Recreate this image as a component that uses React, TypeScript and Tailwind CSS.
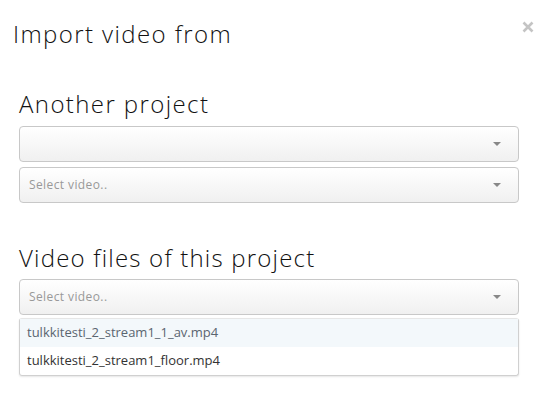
import React from "react";

function Arrow() {
  return (
    <span className="block w-0 h-0 border-t-[4px] border-x-[4px] border-b-0 border-t-[#888] border-x-transparent" />
  );
}

function Select({ placeholder }: { placeholder?: string }) {
  return (
    <div className="h-[36px] w-[500px] rounded-[4px] border border-[#c8c8c8] bg-gradient-to-b from-white to-[#f0f0f0] flex items-center justify-between pl-[9px] pr-[17px]">
      <span className="text-[12px] tracking-[0.4px] text-[#999]">{placeholder ?? ""}</span>
      <Arrow />
    </div>
  );
}

export default function App() {
  return (
    <div className="w-[548px] h-[400px] bg-white text-[#111]" style={{ fontFamily: "'Open Sans', Lato, sans-serif" }}>
      <div className="flex justify-between items-start pl-[13px] pr-[14px] pt-[19px]">
        <h1 className="text-[24px] leading-[29px] font-light tracking-[1.4px]">Import video from</h1>
        <svg width="12" height="12" viewBox="0 0 12 12" className="mt-[2px]">
          <path d="M1.5 1.5 L10.5 10.5 M10.5 1.5 L1.5 10.5" stroke="#c4c4c4" strokeWidth="2.6" strokeLinecap="butt" />
        </svg>
      </div>
      <div className="pl-[19px]">
        <h2 className="mt-[41px] text-[24px] leading-[29px] font-light tracking-[1.4px]">Another project</h2>
        <div className="mt-[8px] flex flex-col gap-[5px]">
          <Select />
          <Select placeholder="Select video.." />
        </div>
        <h2 className="mt-[40px] text-[24px] leading-[29px] font-light tracking-[1.2px]">Video files of this project</h2>
        <div className="mt-[7px]">
          <Select placeholder="Select video.." />
        </div>
        <div className="mt-[3px] w-[500px] rounded-[3px] border border-[#d0d0d0] border-t-[#e6e6e6] shadow-[0_1px_2px_rgba(0,0,0,0.1)] text-[13px]">
          <div className="h-[28px] flex items-center pl-[7px] bg-[#f3f8fb] text-[#5a6570]">tulkkitesti_2_stream1_1_av.mp4</div>
          <div className="h-[28px] flex items-center pl-[7px] text-[#333]">tulkkitesti_2_stream1_floor.mp4</div>
        </div>
      </div>
    </div>
  );
}
